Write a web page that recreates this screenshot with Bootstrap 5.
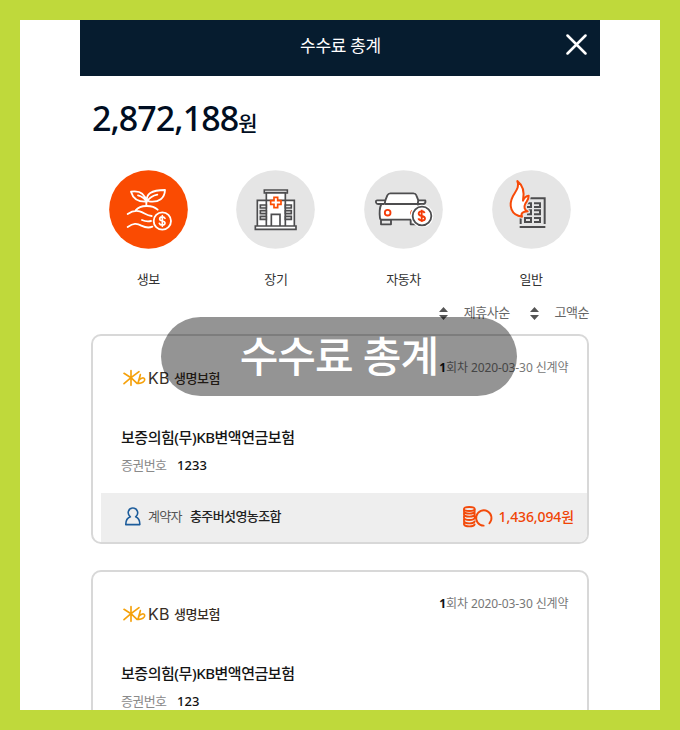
<!DOCTYPE html>
<html lang="ko">
<head>
<meta charset="utf-8">
<meta name="viewport" content="width=device-width, initial-scale=1">
<title>수수료 총계</title>
<link href="https://cdn.jsdelivr.net/npm/bootstrap@5.3.0/dist/css/bootstrap.min.css" rel="stylesheet">
<style>
  body { font-family: "Noto Sans", "Noto Sans CJK KR", sans-serif; color: #222; background: #bfd93b; }
  .frame { width: 680px; height: 730px; border: 20px solid #bfd93b; }
  .app { width: 520px; }
  .topbar { height: 56px; background: #061c2f; padding-right: 13px; }
  .topbar-title { font-size: 17px; line-height: 24px; letter-spacing: -.3px; margin-top: -4px; padding-left: 35px; }
  .close-icon { margin-top: -8px; }
  .total { height: 94px; padding: 18px 0 0 12px; line-height: 48px; color: #000d21; }
  .total-num { font-size: 34px; font-weight: 500; letter-spacing: -.95px; }
  .total-won { font-size: 21px; font-weight: 500; }
  .kinds { padding: 0 5px 0 4.5px; height: 132px; }
  .kind { width: 127.6px; }
  .kind svg { display: block; width: 79px; height: 79px; }
  .kind-name { font-size: 13px; line-height: 20px; margin-top: 20px; letter-spacing: -.4px; color: #333; }
  .sorts { height: 32px; padding-right: 11px; font-size: 13px; line-height: 20px; letter-spacing: -.5px; color: #666; }
  .sorts svg { margin-top: 5px; }
  .sort-gap { margin-left: 20px; }
  .policy { width: 498px; height: 210px; margin-left: 11px; margin-bottom: 26px; border: 2px solid #d8d8d8; border-radius: 10px; }
  .policy-head { height: 87px; padding: 22px 18.5px 0 29px; }
  .logo-mark { width: 24px; height: 18px; }
  .logo-kb { font-family: Inter, sans-serif; font-size: 16px; letter-spacing: .3px; color: #382e25; margin-left: 2px; width: 26px; }
  .logo-name { font-size: 13px; font-weight: 500; letter-spacing: -.45px; color: #382e25; }
  .brand { height: 24px; line-height: 24px; margin-top: 8px; }
  .round { font-size: 12px; line-height: 20px; letter-spacing: -.1px; color: #777; }
  .round b { color: #111; }
  .product { font-size: 15px; font-weight: 500; line-height: 24px; letter-spacing: -.46px; padding-left: 28px; margin-top: 2px; color: #151515; }
  .number { font-size: 13px; line-height: 20px; padding-left: 28px; margin-top: 6px; }
  .number-label { letter-spacing: -.6px; color: #8a8a8a; width: 56px; }
  .number-value { font-weight: 500; letter-spacing: .1px; color: #111; }
  .strip { height: 49px; margin: 18px 0 0 8px; background: #eee; border-bottom-right-radius: 8px; padding: 0 13px 2px 24px; }
  .holder-label { font-size: 13px; letter-spacing: -.7px; color: #555; width: 42px; margin-left: 7px; }
  .holder-name { font-size: 13px; font-weight: 500; letter-spacing: -.6px; color: #222; }
  .fee-icon { margin-right: 6px; }
  .fee { font-size: 14px; font-weight: 500; letter-spacing: -.12px; color: #f04405; }
  .caption-pill { left: 161px; top: 317px; width: 356px; height: 79px; background: rgba(0,0,0,.42); font-size: 42px; font-weight: 500; line-height: 78px; letter-spacing: -.9px; }
</style>
<script src="https://cdn.jsdelivr.net/npm/bootstrap@5.3.0/dist/js/bootstrap.bundle.min.js"></script>
</head>
<body class="m-0">
<svg width="0" height="0" class="position-absolute" aria-hidden="true">
  <symbol id="kb-mark" viewBox="0 0 72 54" fill="none" stroke="#f5a10b" stroke-width="5" stroke-linecap="round" stroke-linejoin="round">
    <path d="M6 13 27 26 51 8M27 5v44M6 44 27 26 45 43M55 17 48 43C59 44 69 38 68 31 67 24 57 26 50 34"/>
  </symbol>
  <symbol id="sort" viewBox="0 0 9 13" fill="#555"><path d="M4.5 0 9 5H0zM0 8h9L4.5 13z"/></symbol>
</svg>
<div class="frame bg-white overflow-hidden position-relative">
  <main class="app mx-auto">
    <header class="topbar d-flex align-items-center text-white">
      <div class="topbar-title flex-grow-1 text-center">수수료 총계</div>
      <svg class="close-icon" width="21" height="21" viewBox="0 0 21 21" fill="none" stroke="#fff" stroke-width="2.5" stroke-linecap="round"><path d="m1.5 1.5 18 18m0-18-18 18"/></svg>
    </header>
    <div class="total"><span class="total-num">2,872,188</span><span class="total-won">원</span></div>

    <div class="kinds d-flex">
      <div class="kind d-flex flex-column align-items-center">
        <svg viewBox="27 30 237 237" fill="none" stroke="#fff" stroke-width="5.5" stroke-linecap="round" stroke-linejoin="round">
          <circle cx="145.5" cy="148.5" r="118" fill="#fa4b02" stroke="none"/>
          <path d="M139 138v-14M141 125c-4-22 12-35 54-35-1 24-17 38-48 34M139 125c-26 1-40-9-46-30 27-4 42 4 46 30M172 104q-20 4-31 20M114 106q16 4 25 18"/>
          <path d="M83 162c13-9 24-11 36-8M107 151c14-17 50-17 66-2M119 154c14 4 20 13 36 14M126 180c9 4 17 5 27 3M83 201c17-11 27-12 41-4 12 6 22 8 33 3"/>
          <circle cx="187" cy="183" r="26"/>
          <path d="M195 175c-4-7-16-5-16 2 0 8 16 4 16 12 0 8-14 8-17 1M187 167v32" stroke-width="5"/>
        </svg>
        <div class="kind-name">생보</div>
      </div>
      <div class="kind d-flex flex-column align-items-center">
        <svg viewBox="27 30 237 237" fill="#fff" stroke="#4d4d4f" stroke-width="5">
          <circle cx="145.5" cy="148.5" r="118" fill="#e5e5e5" stroke="none"/>
          <path d="M91 121h111v77H91zM118 98h57v100h-57zM112 90h69v9h-69zM133 163h26v35h-26zM85 198h122v10H85z"/>
          <path d="M100 135h18v9h-18zm0 17h18v9h-18zm0 17h18v9h-18zM175 135h18v9h-18zm0 17h18v9h-18zm0 17h18v9h-18z" fill="#e5e5e5"/>
          <path d="M141 112h11v10h10v11h-10v10h-11v-10h-10v-11h10z" stroke="#fc4c02"/>
        </svg>
        <div class="kind-name">장기</div>
      </div>
      <div class="kind d-flex flex-column align-items-center">
        <svg viewBox="29 30 237 237" fill="none" stroke="#4d4d4f" stroke-width="5.5" stroke-linejoin="round">
          <circle cx="147.5" cy="148.5" r="118" fill="#e5e5e5" stroke="none"/>
          <path d="M80 179h30v14H80zM169 179h30v14h-30z" fill="#e5e5e5"/>
          <path d="M91 132H81c-6 13-6 28-4 43q0 4 5 4h118v-28l-10-19h18q7-2 5-11h-21l-6-15q-2-6-9-6h-69q-6 0-9 6l-6 15H69q-5 0-4 6 1 5 6 5h20" fill="#fff"/>
          <path d="M91 132h99M93 121l-2 11M192 121l-2 11"/>
          <circle cx="100" cy="158" r="8.5" stroke="#f43b08"/><path d="M172 151q-6 6-1 14" stroke="#f43b08" stroke-width="3"/>
          <circle cx="203" cy="168" r="34" fill="#fff" stroke="none"/>
          <circle cx="203" cy="168" r="28" fill="#fff"/>
          <path d="M211 159c-4-8-18-6-18 2 0 9 19 5 19 14 0 9-16 9-20 0M202 149v37" stroke="#f43b08"/>
        </svg>
        <div class="kind-name">자동차</div>
      </div>
      <div class="kind d-flex flex-column align-items-center">
        <svg viewBox="27 30 237 237" fill="none" stroke="#4d4d4f" stroke-width="6">
          <circle cx="145.5" cy="148.5" r="118" fill="#e5e5e5" stroke="none"/>
          <path d="M130 115h55v77M110 201h77M113 172v20"/>
          <path d="M132 130h12v11h-12M153 130h18v11h-18M132 151h12v12h-12M153 151h18v12h-18M126 174h18v12h-18zM153 174h18v12h-18M144 128v15M171 128v15M144 149v16M171 149v16M171 172v16"/>
          <path id="flame" d="M103 63c8 17-5 31-13 45-15 29-6 57 27 62-5-11 3-15 17-16-10-4-12-13-7-23 5-8 11-12 10-24-9 1-14 7-17 15 5-25-1-47-17-59z" fill="#fff" stroke="#e5e5e5" stroke-width="13" stroke-linejoin="round"/>
          <path d="M103 63c8 17-5 31-13 45-15 29-6 57 27 62-5-11 3-15 17-16-10-4-12-13-7-23 5-8 11-12 10-24-9 1-14 7-17 15 5-25-1-47-17-59z" fill="#fff" stroke="#f74a08" stroke-linejoin="round"/>
        </svg>
        <div class="kind-name">일반</div>
      </div>
    </div>

    <div class="sorts d-flex justify-content-end align-items-start">
      <svg width="9" height="13"><use href="#sort"/></svg><span class="ms-3">제휴사순</span>
      <svg class="sort-gap" width="9" height="13"><use href="#sort"/></svg><span class="ms-3">고액순</span>
    </div>

    <section class="policy">
      <div class="policy-head d-flex justify-content-between align-items-start">
        <div class="brand d-flex align-items-center"><svg class="logo-mark"><use href="#kb-mark"/></svg><span class="logo-kb">KB</span><span class="logo-name">생명보험</span></div>
        <div class="round"><b>1</b>회차 2020-03-30 신계약</div>
      </div>
      <div class="product">보증의힘(무)KB변액연금보험</div>
      <div class="number d-flex"><span class="number-label">증권번호</span><span class="number-value">1233</span></div>
      <div class="strip d-flex align-items-center">
        <svg width="16" height="19" viewBox="0 0 45 54" fill="none" stroke="#1c5c9b" stroke-width="4.5" stroke-linejoin="round"><path d="M15 28C4 19 9 3 22 3s19 16 8 25c8 3 12 8 12 22H2c0-14 4-19 13-22z"/></svg>
        <span class="holder-label">계약자</span><span class="holder-name">충주버섯영농조합</span>
        <svg class="fee-icon ms-auto" width="30" height="22" viewBox="0 0 90 66" fill="none" stroke="#f34a0a" stroke-width="5.5" stroke-linecap="round"><ellipse cx="19" cy="9" rx="16" ry="6"/><path d="M3 10v7c3 8 29 8 32 0v-7M3 20v6c3 8 29 8 32 0v-6M3 30v6c3 8 29 8 32 0v-6M3 40v6c3 8 29 8 32 0M3 50v5c3 8 29 8 32 0M62 59a23 23 0 1 1 17-7"/></svg>
        <span class="fee">1,436,094원</span>
      </div>
    </section>

    <section class="policy">
      <div class="policy-head d-flex justify-content-between align-items-start">
        <div class="brand d-flex align-items-center"><svg class="logo-mark"><use href="#kb-mark"/></svg><span class="logo-kb">KB</span><span class="logo-name">생명보험</span></div>
        <div class="round"><b>1</b>회차 2020-03-30 신계약</div>
      </div>
      <div class="product">보증의힘(무)KB변액연금보험</div>
      <div class="number d-flex"><span class="number-label">증권번호</span><span class="number-value">123</span></div>
    </section>
  </main>
</div>
<div class="caption-pill position-absolute rounded-pill text-white text-center">수수료 총계</div>
</body>
</html>
